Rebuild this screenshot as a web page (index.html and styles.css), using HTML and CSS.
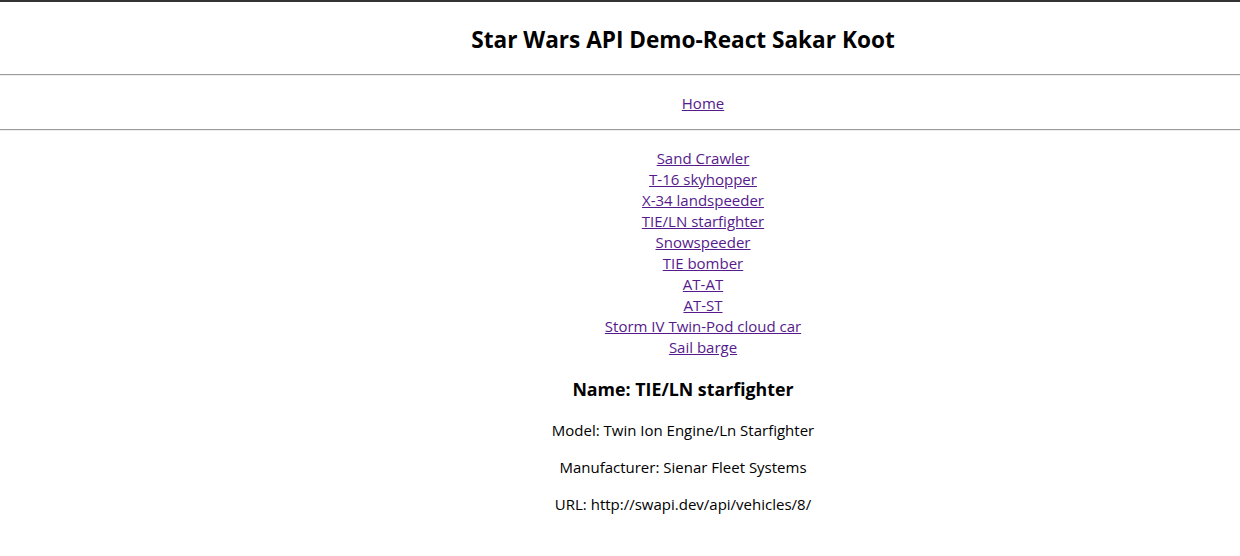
FILE: index.html
```html
<!DOCTYPE html>
<html lang="en">
<head>
<meta charset="utf-8">
<title>Star Wars API Demo-React Sakar Koot</title>
<link rel="stylesheet" href="styles.css">
</head>
<body>
<div class="app">
  <header class="header">
    <h1 class="title">Star Wars API Demo-React Sakar Koot</h1>
  </header>
  <hr class="rule">
  <nav class="nav">
    <a class="link" href="#">Home</a>
  </nav>
  <hr class="rule">
  <main class="content">
    <ul class="vehicles">
      <li><a class="link" href="#">Sand Crawler</a></li>
      <li><a class="link" href="#">T-16 skyhopper</a></li>
      <li><a class="link" href="#">X-34 landspeeder</a></li>
      <li><a class="link" href="#">TIE/LN starfighter</a></li>
      <li><a class="link" href="#">Snowspeeder</a></li>
      <li><a class="link" href="#">TIE bomber</a></li>
      <li><a class="link" href="#">AT-AT</a></li>
      <li><a class="link" href="#">AT-ST</a></li>
      <li><a class="link" href="#">Storm IV Twin-Pod cloud car</a></li>
      <li><a class="link" href="#">Sail barge</a></li>
    </ul>
    <section class="details">
      <h3 class="name">Name: TIE/LN starfighter</h3>
      <p class="field">Model: Twin Ion Engine/Ln Starfighter</p>
      <p class="field">Manufacturer: Sienar Fleet Systems</p>
      <p class="field">URL: http://swapi.dev/api/vehicles/8/</p>
    </section>
  </main>
</div>
</body>
</html>
```
FILE: styles.css
```css
html, body {
  margin: 0;
  padding: 0;
  background: #fff;
}
body {
  font-family: "Open Sans", "Noto Sans", sans-serif;
  font-size: 15px;
  color: #000;
  border-top: 2px solid #333;
}
.app {
  display: flex;
  flex-direction: column;
}
.header {
  padding: 22px 0 19px 126px;
  text-align: center;
}
.title {
  margin: 0;
  font-size: 22.6px;
  line-height: 31px;
  font-weight: 700;
}
.rule {
  margin: 0;
  height: 0;
  border: 0;
  border-top: 1px solid #9a9a9a;
  border-bottom: 1px solid #eeeeee;
}
.nav {
  padding: 17px 0 15px 166px;
  text-align: center;
  line-height: 21px;
}
.link {
  color: #551a8b;
  text-decoration: underline;
}
.content {
  display: flex;
  flex-direction: column;
  padding-top: 17px;
  text-align: center;
}
.vehicles {
  list-style: none;
  margin: 0;
  padding: 0 0 0 166px;
  line-height: 21px;
}
.details {
  display: flex;
  flex-direction: column;
  padding: 19px 0 0 126px;
}
.name {
  margin: 0;
  font-size: 17.8px;
  line-height: 25px;
  font-weight: 700;
}
.field {
  margin: 18px 0 0;
  line-height: 21px;
}
.field + .field {
  margin-top: 16px;
}
```
